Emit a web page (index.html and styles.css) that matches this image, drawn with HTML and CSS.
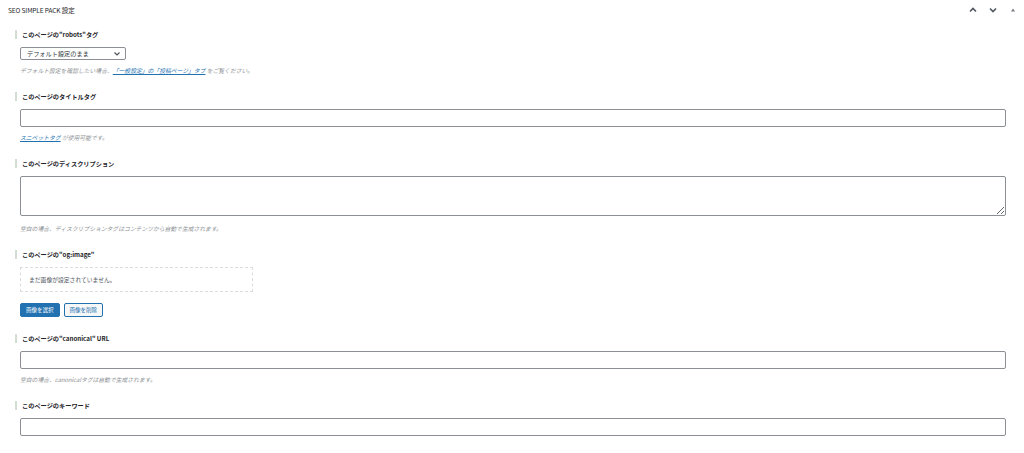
FILE: index.html
```html
<!DOCTYPE html>
<html lang="ja">
<head>
    <meta charset="UTF-8">
    <meta name="viewport" content="width=device-width, initial-scale=1.0">
    <title>SEO SIMPLE PACK 設定</title>
    <link rel="stylesheet" href="styles.css">
</head>
<body>
    <div class="postbox">
        <div class="postbox-header">
            <h2>SEO SIMPLE PACK 設定</h2>
            <div class="handle-actions">
                <svg width="10" height="8" viewBox="0 0 10 8"><path d="M2 5.5 L5 2.5 L8 5.5" fill="none" stroke="#50575e" stroke-width="1.6"/></svg>
                <svg width="10" height="8" viewBox="0 0 10 8"><path d="M2 2.5 L5 5.5 L8 2.5" fill="none" stroke="#50575e" stroke-width="1.6"/></svg>
                <svg width="10" height="8" viewBox="0 0 10 8"><path d="M3 5.5 L5 2.5 L7 5.5 Z" fill="#787c82"/></svg>
            </div>
        </div>

        <div class="inside">
            <div class="field">
                <label class="field-label">このページの"robots"タグ</label>
                <div class="select">
                    <span>デフォルト設定のまま</span>
                    <svg width="8" height="6" viewBox="0 0 8 6"><path d="M1.5 1.5 L4 4 L6.5 1.5" fill="none" stroke="#50575e" stroke-width="1.2"/></svg>
                </div>
                <p class="help">デフォルト設定を確認したい場合、<a href="#">「一般設定」の「投稿ページ」タブ</a> をご覧ください。</p>
            </div>

            <div class="field">
                <label class="field-label">このページのタイトルタグ</label>
                <input type="text" class="text-input">
                <p class="help"><a href="#">スニペットタグ</a> が使用可能です。</p>
            </div>

            <div class="field">
                <label class="field-label">このページのディスクリプション</label>
                <textarea class="text-area"></textarea>
                <p class="help help-after-area">空白の場合、ディスクリプションタグはコンテンツから自動で生成されます。</p>
            </div>

            <div class="field">
                <label class="field-label">このページの"og:image"</label>
                <div class="image-preview">まだ画像が設定されていません。</div>
                <div class="buttons">
                    <button class="button button-primary">画像を選択</button>
                    <button class="button">画像を削除</button>
                </div>
            </div>

            <div class="field">
                <label class="field-label">このページの"canonical" URL</label>
                <input type="text" class="text-input">
                <p class="help">空白の場合、canonicalタグは自動で生成されます。</p>
            </div>

            <div class="field">
                <label class="field-label">このページのキーワード</label>
                <input type="text" class="text-input">
            </div>
        </div>
    </div>
</body>
</html>
```

FILE: styles.css
```css
body {
    font-family: "Noto Sans CJK JP", "Liberation Sans", sans-serif;
    margin: 0;
    background-color: #fff;
    color: #1d2327;
}
.postbox {
    padding: 0 18px 0 8px;
}
.postbox-header {
    display: flex;
    align-items: center;
    justify-content: space-between;
    height: 19px;
}
.postbox-header h2 {
    margin: 0;
    font-size: 6.5px;
    font-weight: normal;
    letter-spacing: -0.1px;
}
.handle-actions {
    display: flex;
    gap: 10px;
    margin-right: -12px;
}
.inside {
    padding: 11px 0 0 12px;
}
.field {
    margin-bottom: 17px;
}
.field-label {
    display: block;
    font-size: 6.2px;
    font-weight: bold;
    line-height: 9px;
    padding-left: 5px;
    margin-left: -5px;
    border-left: 2px solid #d3ddd3;
    margin-bottom: 8px;
}
.select {
    width: 106px;
    height: 13px;
    box-sizing: border-box;
    border: 1px solid #8c8f94;
    border-radius: 2px;
    display: flex;
    align-items: center;
    justify-content: space-between;
    padding: 0 4px 0 6px;
    font-size: 6.2px;
    color: #2c3338;
}
.help {
    margin: 6px 0 0;
    font-size: 5.8px;
    line-height: 9px;
    font-style: italic;
    color: #8c8f94;
}
.help-after-area {
    margin-top: 8px;
}
.help a {
    color: #2271b1;
}
.text-input {
    display: block;
    width: 100%;
    height: 18px;
    box-sizing: border-box;
    border: 1px solid #8c8f94;
    border-radius: 2px;
    margin: 0;
}
.text-area {
    display: block;
    width: 100%;
    height: 40px;
    box-sizing: border-box;
    border: 1px solid #8c8f94;
    border-radius: 2px;
    margin: 0;
}
.image-preview {
    width: 233px;
    height: 25px;
    box-sizing: border-box;
    border: 1px dashed #dcdcde;
    display: flex;
    align-items: center;
    padding-left: 8px;
    font-size: 5.8px;
    color: #50575e;
}
.buttons {
    display: flex;
    gap: 4px;
    margin-top: 11px;
}
.button {
    height: 14px;
    padding: 0 5px;
    font-family: inherit;
    font-size: 5.5px;
    border: 1px solid #2271b1;
    border-radius: 2px;
    background: #f6f7f7;
    color: #2271b1;
}
.button-primary {
    background: #2271b1;
    color: #fff;
}
```
